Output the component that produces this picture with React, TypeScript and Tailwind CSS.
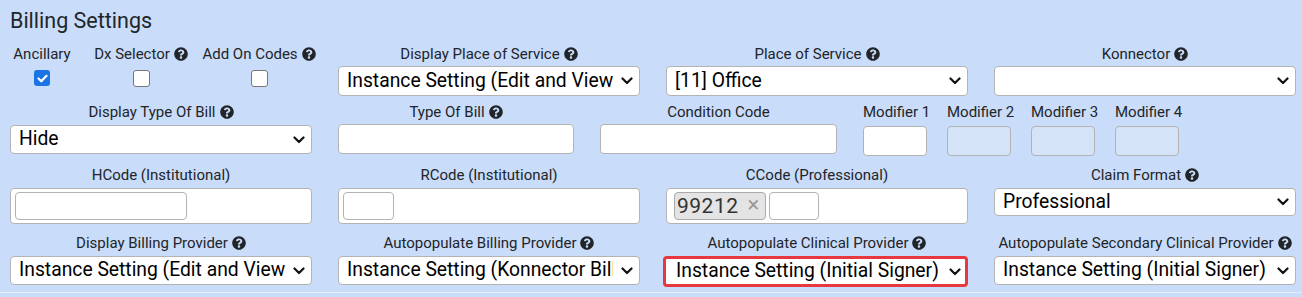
import React from "react";
import { FaQuestionCircle } from "react-icons/fa";

function Help() {
  return <FaQuestionCircle size={14} className="text-[#212529] shrink-0" />;
}

function Label({ text, help, left }: { text: string; help?: boolean; left?: boolean }) {
  return (
    <div
      className={`h-[20px] flex items-center gap-[4px] text-[15px] whitespace-nowrap ${
        left ? "justify-start" : "justify-center"
      }`}
    >
      <span>{text}</span>
      {help && <Help />}
    </div>
  );
}

function Chevron() {
  return (
    <svg width="12" height="8" viewBox="0 0 12 8" className="shrink-0 ml-[8px]">
      <path d="M1.5 1.5l4.5 4.5 4.5-4.5" fill="none" stroke="#111" strokeWidth="2.2" strokeLinecap="round" strokeLinejoin="round" />
    </svg>
  );
}

function Select({ value, h = "h-[30px]", red }: { value: string; h?: string; red?: boolean }) {
  return (
    <div
      className={`${h} bg-white rounded-[4px] flex items-center text-[19.3px] text-black ${
        red
          ? "border-[3px] border-[#e8373f] -ml-[3px] pl-[10px] pr-[4px]"
          : "border border-[#b3b3b3] pl-[8px] pr-[6px]"
      }`}
    >
      <span className="flex-1 overflow-hidden whitespace-nowrap leading-none pb-[1px]">{value}</span>
      <Chevron />
    </div>
  );
}

function Check({ on }: { on?: boolean }) {
  return on ? (
    <div className="w-[16px] h-[16px] rounded-[3px] bg-[#1b74e4] flex items-center justify-center">
      <svg width="11" height="9" viewBox="0 0 11 9">
        <path d="M1.5 4.5l2.8 2.8L9.5 1.8" fill="none" stroke="#fff" strokeWidth="2.2" strokeLinecap="round" strokeLinejoin="round" />
      </svg>
    </div>
  ) : (
    <div className="w-[17px] h-[17px] rounded-[3px] bg-white border border-[#767676]" />
  );
}

export default function App() {
  return (
    <div className="w-[1302px] h-[297px] bg-[#c9dcf9] font-['Roboto',sans-serif] text-[#212529] overflow-hidden">
      <div className="pl-[10px] pr-[6px]">
        <h2 className="h-[40px] pt-[7px] text-[21.5px] leading-[28px]">Billing Settings</h2>

        {/* row 1 */}
        <div className="grid grid-cols-4 gap-x-[26px] mt-[4px]">
          <div className="flex">
            <div className="w-[64px] flex flex-col items-center">
              <Label text="Ancillary" />
              <div className="mt-[6px]">
                <Check on />
              </div>
            </div>
            <div className="w-[134px] flex flex-col items-center">
              <Label text="Dx Selector" help />
              <div className="mt-[6px]">
                <Check />
              </div>
            </div>
            <div className="w-[102px] flex flex-col items-center">
              <Label text="Add On Codes" help />
              <div className="mt-[6px]">
                <Check />
              </div>
            </div>
          </div>
          <div>
            <Label text="Display Place of Service" help />
            <div className="mt-[2px]">
              <Select value="Instance Setting (Edit and View Only)" />
            </div>
          </div>
          <div>
            <Label text="Place of Service" help />
            <div className="mt-[2px]">
              <Select value="[11] Office" />
            </div>
          </div>
          <div>
            <Label text="Konnector" help />
            <div className="mt-[2px]">
              <Select value="" />
            </div>
          </div>
        </div>

        {/* row 2 */}
        <div className="flex mt-[6px]">
          <div className="w-[302px]">
            <Label text="Display Type Of Bill" help />
            <div className="mt-[3px]">
              <Select value="Hide" h="h-[29px]" />
            </div>
          </div>
          <div className="w-[236px] ml-[26px]">
            <Label text="Type Of Bill" help />
            <div className="mt-[2px] h-[30px] bg-white border border-[#b3b3b3] rounded-[4px]" />
          </div>
          <div className="w-[237px] ml-[26px]">
            <Label text="Condition Code" />
            <div className="mt-[2px] h-[30px] bg-white border border-[#b3b3b3] rounded-[4px]" />
          </div>
          <div className="flex gap-[20px] ml-[26px]">
            {["Modifier 1", "Modifier 2", "Modifier 3", "Modifier 4"].map((m, i) => (
              <div key={m} className="w-[64px]">
                <Label text={m} left />
                <div
                  className={`mt-[4px] h-[30px] border border-[#b3b3b3] rounded-[4px] ${
                    i === 0 ? "bg-white" : "bg-[#d5e3f8]"
                  }`}
                />
              </div>
            ))}
          </div>
        </div>

        {/* row 3 */}
        <div className="grid grid-cols-4 gap-x-[26px] mt-[9px]">
          <div>
            <Label text="HCode (Institutional)" />
            <div className="mt-[3px] h-[36px] bg-white border border-[#b3b3b3] rounded-[4px] flex items-center px-[4px]">
              <div className="w-[172px] h-[28px] border border-[#b3b3b3] rounded-[4px]" />
            </div>
          </div>
          <div>
            <Label text="RCode (Institutional)" />
            <div className="mt-[3px] h-[36px] bg-white border border-[#b3b3b3] rounded-[4px] flex items-center px-[4px]">
              <div className="w-[51px] h-[28px] border border-[#b3b3b3] rounded-[4px]" />
            </div>
          </div>
          <div>
            <Label text="CCode (Professional)" />
            <div className="mt-[3px] h-[36px] bg-white border border-[#b3b3b3] rounded-[4px] flex items-center gap-[3px] pl-[7px]">
              <div className="w-[92px] h-[28px] bg-[#e4e4e4] border border-[#aaaaaa] rounded-[4px] flex items-center pl-[2px] gap-[9px]">
                <span className="text-[21px] leading-none text-[#333] tracking-[0.5px]">99212</span>
                <span className="text-[22px] leading-none text-[#999] pb-[2px]">×</span>
              </div>
              <div className="w-[50px] h-[28px] border border-[#b3b3b3] rounded-[4px]" />
            </div>
          </div>
          <div>
            <Label text="Claim Format" help />
            <div className="mt-[3px]">
              <Select value="Professional" h="h-[28px]" />
            </div>
          </div>
        </div>

        {/* row 4 */}
        <div className="grid grid-cols-4 gap-x-[26px] mt-[9px]">
          <div>
            <Label text="Display Billing Provider" help />
            <div className="mt-[3px]">
              <Select value="Instance Setting (Edit and View Only)" h="h-[29px]" />
            </div>
          </div>
          <div>
            <Label text="Autopopulate Billing Provider" help />
            <div className="mt-[3px]">
              <Select value="Instance Setting (Konnector Billing Provider)" h="h-[29px]" />
            </div>
          </div>
          <div>
            <Label text="Autopopulate Clinical Provider" help />
            <div className="mt-[3px]">
              <Select value="Instance Setting (Initial Signer)" h="h-[31px]" red />
            </div>
          </div>
          <div>
            <Label text="Autopopulate Secondary Clinical Provider" help />
            <div className="mt-[3px]">
              <Select value="Instance Setting (Initial Signer)" h="h-[29px]" />
            </div>
          </div>
        </div>
      </div>
      <div className="mt-[5px] h-[1px] bg-[#e6effc]" />
    </div>
  );
}
